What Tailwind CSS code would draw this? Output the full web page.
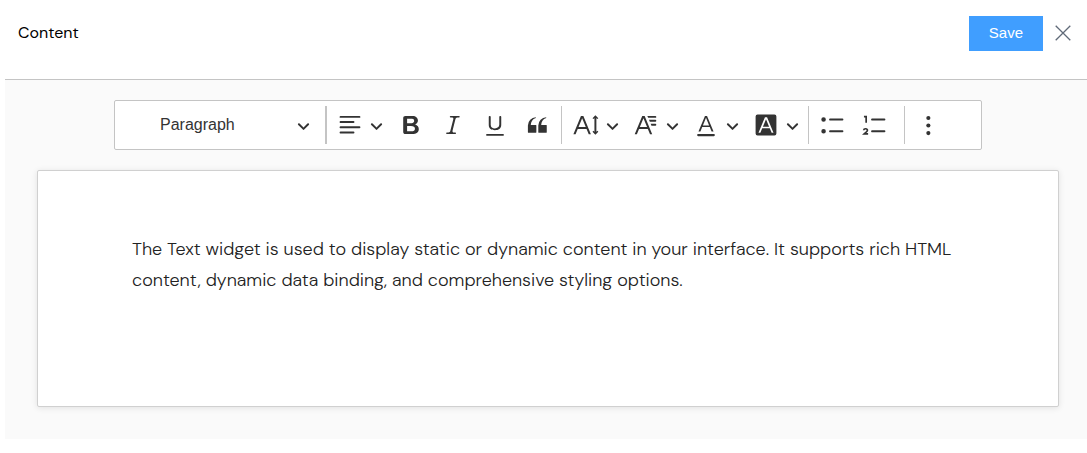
<!DOCTYPE html>
<html lang="en">

<head>
    <meta charset="UTF-8" />
    <meta name="viewport" content="width=device-width, initial-scale=1.0" />
    <title>Content</title>
    <script src="https://cdn.jsdelivr.net/npm/@tailwindcss/browser@4"></script>
</head>

<body class="bg-white font-['DM_Sans','Inter',sans-serif] text-[#333]">
    <!-- Shared icons -->
    <svg class="hidden">
        <symbol id="chevron" viewBox="0 0 10 10">
            <path d="M.941 4.523a.75.75 0 1 1 1.06-1.06l3.006 3.005 3.005-3.005a.75.75 0 1 1 1.06 1.06l-3.549 3.55a.75.75 0 0 1-1.168-.136L.941 4.523z" />
        </symbol>
    </svg>

    <!-- Header -->
    <header class="ml-[5px] flex h-[79px] items-start justify-between pl-[13px] pr-4 pt-4">
        <h1 class="pt-[5px] text-base text-black">Content</h1>
        <div class="flex items-center gap-3">
            <button type="button" class="h-[35px] bg-[#409eff] px-5 font-['Liberation_Sans',sans-serif] text-[15px] text-white">Save</button>
            <button type="button" aria-label="Close">
                <svg class="h-[17px] w-4" viewBox="0 0 16 17" fill="none" stroke="#606a78" stroke-width="1.3">
                    <path d="M.7.7l14.6 14.6M15.3.7L.7 15.3" />
                </svg>
            </button>
        </div>
    </header>

    <main class="ml-[5px] border-t border-[#c4c4c4] bg-[#fafafa] pb-8 pl-8 pr-7 pt-5">
        <!-- Toolbar -->
        <div role="toolbar" aria-label="Editor toolbar" class="mx-auto flex h-[50px] w-fit items-center rounded-xs border border-[#c4c4c4] bg-white pr-[31px]">
            <div class="relative flex items-center">
                <select aria-label="Heading" class="h-10 w-[207px] appearance-none pl-[45px] font-['Liberation_Sans',sans-serif] text-base">
                    <option>Paragraph</option>
                    <option>Heading 1</option>
                    <option>Heading 2</option>
                </select>
                <svg class="pointer-events-none absolute right-3 size-[13px]" fill="#333"><use href="#chevron" /></svg>
            </div>
            <span class="mx-[3px] h-[38px] w-0.5 bg-[#c4c4c4]"></span>
            <button type="button" aria-label="Text alignment" class="flex h-10 w-[60px] items-center gap-[7px] pl-[7px]">
                <svg class="size-[26px]" viewBox="0 0 20 20" fill="#333"><path d="M2 3.75c0 .414.336.75.75.75h14.5a.75.75 0 1 0 0-1.5H2.75a.75.75 0 0 0-.75.75zm0 8c0 .414.336.75.75.75h14.5a.75.75 0 1 0 0-1.5H2.75a.75.75 0 0 0-.75.75zm0 4c0 .414.336.75.75.75h9.929a.75.75 0 1 0 0-1.5H2.75a.75.75 0 0 0-.75.75zm0-8c0 .414.336.75.75.75h9.929a.75.75 0 1 0 0-1.5H2.75a.75.75 0 0 0-.75.75z" /></svg>
                <svg class="size-[13px]" fill="#333"><use href="#chevron" /></svg>
            </button>
            <button type="button" aria-label="Bold" class="flex h-10 w-[42px] items-center justify-center">
                <svg class="size-[26px]" viewBox="0 0 20 20" fill="#333"><path d="M10.187 17H5.773c-.637 0-1.092-.138-1.364-.415-.273-.277-.409-.718-.409-1.323V4.738c0-.617.14-1.062.419-1.332.279-.27.73-.406 1.354-.406h4.68c.69 0 1.288.041 1.793.124.506.083.96.242 1.36.478.341.197.644.447.906.75a3.262 3.262 0 0 1 .808 2.162c0 1.401-.722 2.426-2.167 3.075C15.05 10.175 16 11.315 16 13.01a3.756 3.756 0 0 1-2.296 3.504 6.1 6.1 0 0 1-1.517.377c-.571.073-1.238.11-2 .11zm-.217-6.217H7v4.087h3.069c1.977 0 2.965-.69 2.965-2.072 0-.707-.256-1.22-.768-1.537-.512-.319-1.277-.478-2.296-.478zM7 5.13v3.619h2.606c.729 0 1.292-.067 1.69-.2a1.6 1.6 0 0 0 .91-.765c.165-.267.247-.566.247-.897 0-.707-.26-1.176-.778-1.409-.519-.232-1.31-.348-2.375-.348H7z" /></svg>
            </button>
            <button type="button" aria-label="Italic" class="flex h-10 w-[42px] items-center justify-center">
                <svg class="size-[26px]" viewBox="0 0 20 20" fill="#333"><path d="M9.586 14.633l.021.004c-.036.335.095.655.393.962.082.083.173.15.274.201h1.474a.6.6 0 1 1 0 1.2H5.304a.6.6 0 0 1 0-1.2h1.15c.474-.07.809-.182 1.005-.334.157-.122.291-.32.404-.597l2.416-9.55a1.053 1.053 0 0 0-.281-.823 1.12 1.12 0 0 0-.442-.296H8.15a.6.6 0 0 1 0-1.2h6.443a.6.6 0 1 1 0 1.2h-1.195c-.376.056-.65.155-.823.296-.215.175-.423.439-.623.79l-2.366 9.347z" /></svg>
            </button>
            <button type="button" aria-label="Underline" class="flex h-10 w-[42px] items-center justify-center">
                <svg class="size-[26px]" viewBox="0 0 20 20" fill="#333"><path d="M3.3 18.3v-1.4h13.4v1.4H3.3zM5.2 10V3.6c0-.4.4-.6.8-.6.3 0 .7.2.7.6v6.2c0 2 1.3 2.8 3.2 2.8 1.9 0 3.4-.9 3.4-2.9V3.6c0-.3.4-.5.8-.5.3 0 .7.2.7.5V10c0 2.7-2.2 4-4.9 4-2.6 0-4.7-1.2-4.7-4z" /></svg>
            </button>
            <button type="button" aria-label="Block quote" class="flex h-10 w-[42px] items-center justify-center">
                <svg class="size-[26px]" viewBox="0 0 20 20" fill="#333"><path d="M3 10.423a6.5 6.5 0 0 1 6.056-6.408l.038.67C6.448 5.423 5.354 7.663 5.22 10H9c.552 0 .5.432.5.986v4.511c0 .554-.448.503-1 .503h-5c-.552 0-.5-.449-.5-1.003v-4.574zm8 0a6.5 6.5 0 0 1 6.056-6.408l.038.67c-2.646.739-3.74 2.979-3.873 5.315H17c.552 0 .5.432.5.986v4.511c0 .554-.448.503-1 .503h-5c-.552 0-.5-.449-.5-1.003v-4.574z" /></svg>
            </button>
            <span class="mx-[3px] h-[38px] w-px bg-[#c4c4c4]"></span>
            <button type="button" aria-label="Font size" class="flex h-10 w-[60px] items-center gap-[7px] pl-2">
                <svg class="size-[26px]" viewBox="0 0 20 20" fill="#333"><path d="M9.816 11.5L7.038 4.785 4.261 11.5h5.555zm.62 1.5H3.641l-1.666 4.028H.312l5.789-14h1.875l5.789 14h-1.663L10.436 13zm7.55 2.279l.779-.779.707.707-2.265 2.265-2.193-2.265.707-.707.765.765V4.825c0-.042 0-.083.002-.123l-.77.77-.707-.707L17.207 2.5l2.265 2.265-.707.707-.782-.782c.002.043.003.089.003.135v10.454z" /></svg>
                <svg class="size-[13px]" fill="#333"><use href="#chevron" /></svg>
            </button>
            <button type="button" aria-label="Font family" class="flex h-10 w-[60px] items-center gap-[7px] pl-2">
                <svg class="size-[26px]" viewBox="0 0 20 20" fill="#333"><path d="M11.03 3h6.149a.75.75 0 1 1 0 1.5h-5.514L11.03 3zm1.27 3h4.879a.75.75 0 1 1 0 1.5h-4.244L12.3 6zm1.27 3h3.609a.75.75 0 1 1 0 1.5h-2.973L13.57 9zm-2.754 2.5L8.038 4.785 5.261 11.5h5.555zm.62 1.5H4.641l-1.666 4.028H1.312l5.789-14h1.875l5.789 14h-1.663L11.436 13z" /></svg>
                <svg class="size-[13px]" fill="#333"><use href="#chevron" /></svg>
            </button>
            <button type="button" aria-label="Font color" class="flex h-10 w-[60px] items-center gap-[7px] pl-2">
                <svg class="size-[26px]" viewBox="0 0 20 20" fill="#333"><path d="M12.4 10.3L10 4.5l-2.4 5.8h4.8zm.5 1.2H7.1L5.7 15H4.2l5-12h1.6l5 12h-1.5l-1.4-3.5zM16 18.6H4a.85.85 0 0 1 0-1.7h12a.85.85 0 0 1 0 1.7z" /></svg>
                <svg class="size-[13px]" fill="#333"><use href="#chevron" /></svg>
            </button>
            <button type="button" aria-label="Font background color" class="flex h-10 w-[60px] items-center gap-[7px] pl-2">
                <svg class="size-[26px]" viewBox="0 0 20 20" fill="#333"><path fill-rule="evenodd" d="M3.5 2h13A1.5 1.5 0 0 1 18 3.5v13a1.5 1.5 0 0 1-1.5 1.5h-13A1.5 1.5 0 0 1 2 16.5v-13A1.5 1.5 0 0 1 3.5 2zm8.88 9.262H7.62L10 5.506l2.38 5.756zm.532 1.285L14.34 16h1.426L10.804 4H9.196L4.234 16H5.66l1.428-3.453h5.824z" /></svg>
                <svg class="size-[13px]" fill="#333"><use href="#chevron" /></svg>
            </button>
            <span class="mx-[3px] h-[38px] w-px bg-[#c4c4c4]"></span>
            <button type="button" aria-label="Bulleted list" class="flex h-10 w-[42px] items-center justify-center">
                <svg class="size-[26px]" viewBox="0 0 20 20" fill="#333"><path d="M7 5.75c0 .414.336.75.75.75h9.5a.75.75 0 1 0 0-1.5h-9.5a.75.75 0 0 0-.75.75zM1 5.75a1.75 1.75 0 1 1 3.5 0 1.75 1.75 0 0 1-3.5 0zm6 9c0 .414.336.75.75.75h9.5a.75.75 0 1 0 0-1.5h-9.5a.75.75 0 0 0-.75.75zm-6 0a1.75 1.75 0 1 1 3.5 0 1.75 1.75 0 0 1-3.5 0z" /></svg>
            </button>
            <button type="button" aria-label="Numbered list" class="flex h-10 w-[42px] items-center justify-center">
                <svg class="size-[26px]" viewBox="0 0 20 20" fill="#333">
                    <path d="M7 5.75c0 .414.336.75.75.75h9.5a.75.75 0 1 0 0-1.5h-9.5a.75.75 0 0 0-.75.75zm0 9c0 .414.336.75.75.75h9.5a.75.75 0 1 0 0-1.5h-9.5a.75.75 0 0 0-.75.75z" />
                    <path fill="none" stroke="#333" stroke-width="1.3" d="M1.5 3.6h1.7v4.7M1.3 14c.1-1.5 2.9-1.5 2.9.1 0 1.1-1.5 1.8-2.5 2.7h3" />
                </svg>
            </button>
            <span class="ml-2 mr-[3px] h-[38px] w-px bg-[#c4c4c4]"></span>
            <button type="button" aria-label="Show more items" class="flex h-10 w-[42px] items-center justify-center">
                <svg class="size-[26px]" viewBox="0 0 20 20" fill="#333">
                    <circle cx="9.5" cy="4.6" r="1.6" />
                    <circle cx="9.5" cy="10.4" r="1.6" />
                    <circle cx="9.5" cy="16.2" r="1.6" />
                </svg>
            </button>
        </div>

        <!-- Editor -->
        <div class="mt-5 flex rounded-xs border border-[#d0d0d0] bg-white px-[94px] pb-16 pt-[63px] shadow-[0_1px_6px_rgba(0,0,0,0.1)]">
            <textarea aria-label="Rich text content" rows="3" spellcheck="false" class="h-[108px] w-full resize-none text-lg leading-[31px] font-light text-[#222] outline-none">The Text widget is used to display static or dynamic content in your interface. It supports rich HTML content, dynamic data binding, and comprehensive styling options.</textarea>
        </div>
    </main>
</body>

</html>
